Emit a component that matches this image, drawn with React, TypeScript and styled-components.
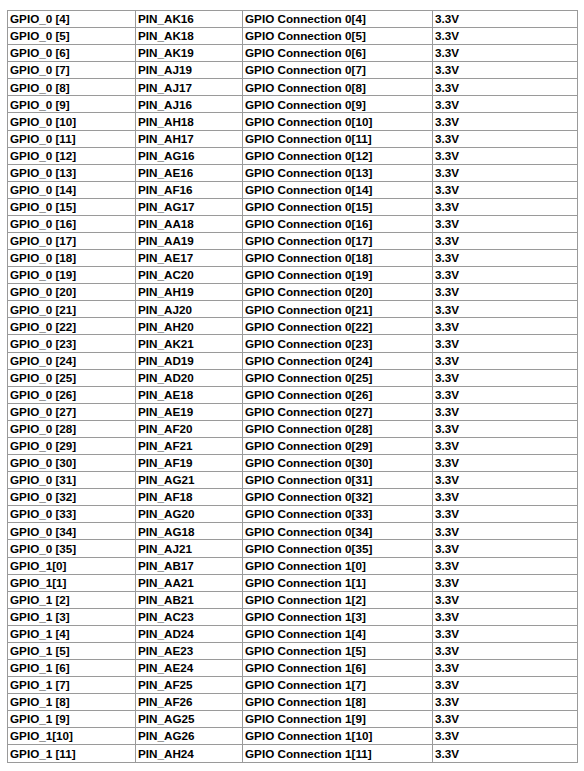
import React from "react";
import styled, { createGlobalStyle } from "styled-components";

const Global = createGlobalStyle`
  html, body { margin: 0; padding: 0; background: #ffffff; }
`;

const Page = styled.div`
  padding: 10px 0 0 7px;
`;

const Table = styled.table`
  border-collapse: collapse;
  width: 570px;
  height: 753px;
  table-layout: fixed;
  font-family: "Liberation Sans", Arial, sans-serif;
  font-weight: bold;
  font-size: 11.7px;
  color: #000;
`;

const Col = styled.col<{ $w: number }>`
  width: ${(p) => p.$w}px;
`;

const Cell = styled.td`
  box-sizing: border-box;
  border: 1px solid #9a9a9a;
  padding: 0 0 0 2px;
  line-height: 1;
  white-space: nowrap;
  overflow: hidden;
  vertical-align: middle;
`;

type Row = [string, string, string];

const pins0 = [
  "AK16", "AK18", "AK19", "AJ19", "AJ17", "AJ16", "AH18", "AH17", "AG16", "AE16",
  "AF16", "AG17", "AA18", "AA19", "AE17", "AC20", "AH19", "AJ20", "AH20", "AK21",
  "AD19", "AD20", "AE18", "AE19", "AF20", "AF21", "AF19", "AG21", "AF18", "AG20",
  "AG18", "AJ21",
];

const rows: Row[] = [
  ...pins0.map((p, i): Row => [`GPIO_0 [${i + 4}]`, `PIN_${p}`, `GPIO Connection 0[${i + 4}]`]),
  ["GPIO_1[0]", "PIN_AB17", "GPIO Connection 1[0]"],
  ["GPIO_1[1]", "PIN_AA21", "GPIO Connection 1[1]"],
  ["GPIO_1 [2]", "PIN_AB21", "GPIO Connection 1[2]"],
  ["GPIO_1 [3]", "PIN_AC23", "GPIO Connection 1[3]"],
  ["GPIO_1 [4]", "PIN_AD24", "GPIO Connection 1[4]"],
  ["GPIO_1 [5]", "PIN_AE23", "GPIO Connection 1[5]"],
  ["GPIO_1 [6]", "PIN_AE24", "GPIO Connection 1[6]"],
  ["GPIO_1 [7]", "PIN_AF25", "GPIO Connection 1[7]"],
  ["GPIO_1 [8]", "PIN_AF26", "GPIO Connection 1[8]"],
  ["GPIO_1 [9]", "PIN_AG25", "GPIO Connection 1[9]"],
  ["GPIO_1[10]", "PIN_AG26", "GPIO Connection 1[10]"],
  ["GPIO_1 [11]", "PIN_AH24", "GPIO Connection 1[11]"],
];

export default function App() {
  return (
    <Page>
      <Global />
      <Table>
        <colgroup>
          <Col $w={128} />
          <Col $w={107} />
          <Col $w={190} />
          <Col $w={145} />
        </colgroup>
        <tbody>
          {rows.map((r, i) => (
            <tr key={i}>
              <Cell>{r[0]}</Cell>
              <Cell>{r[1]}</Cell>
              <Cell>{r[2]}</Cell>
              <Cell>3.3V</Cell>
            </tr>
          ))}
        </tbody>
      </Table>
    </Page>
  );
}
